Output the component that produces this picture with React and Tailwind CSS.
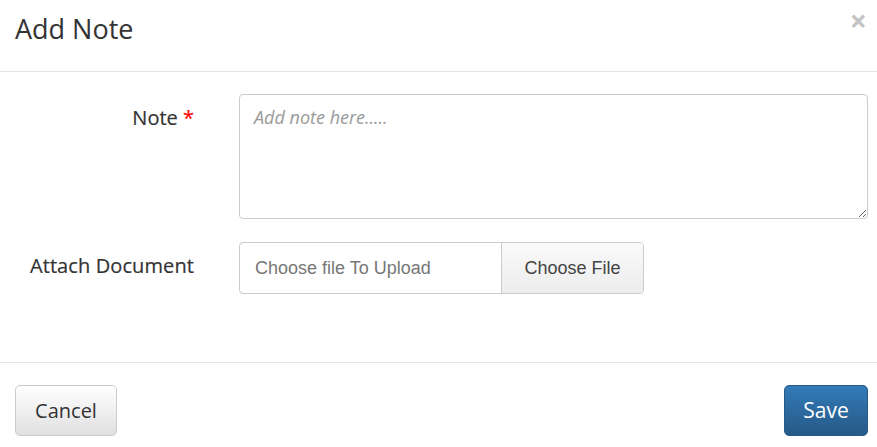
import React from "react";

const App = () => {
  return (
    <div className="w-[877px] h-[447px] bg-white font-['Open_Sans',sans-serif] text-[#333] overflow-hidden">
      {/* Header */}
      <div className="h-[72px] border-b border-[#e5e5e5] flex items-start justify-between pl-[15px] pr-[10px]">
        <h4 className="text-[27px] leading-none mt-[15px] text-[#333]">Add Note</h4>
        <button className="text-[30px] font-bold leading-none mt-[6px] text-[#c4c4c4]">×</button>
      </div>

      {/* Body */}
      <div className="h-[290px] pt-[22px] pr-[9px]">
        <div className="flex">
          <label className="w-[194px] text-right text-[20px] leading-[26px] pt-[11px] text-[#333] [-webkit-text-stroke:0.2px_#333]">
            Note <span className="text-[#ff0000] [-webkit-text-stroke:0.2px_#ff0000]">*</span>
          </label>
          <textarea
            placeholder="Add note here....."
            className="ml-[45px] w-[629px] h-[125px] border border-[#ccc] rounded-[4px] px-[14px] py-[9px] text-[18px] italic placeholder:text-[#999] resize-y outline-none"
          />
        </div>
        <div className="flex mt-[23px]">
          <label className="w-[194px] text-right text-[20px] leading-[26px] pt-[11px] pl-[20px] text-[#333] whitespace-nowrap tracking-[0.1px] [-webkit-text-stroke:0.2px_#333]">
            Attach Document
          </label>
          <div className="ml-[45px] w-[405px] h-[52px] flex border border-[#ccc] rounded-[4px] overflow-hidden font-['Liberation_Sans',Arial,sans-serif]">
            <div className="flex-1 flex items-center pl-[15px] text-[18px] text-[#777]">
              Choose file To Upload
            </div>
            <div className="w-[142px] flex items-center justify-center border-l border-[#ccc] bg-gradient-to-b from-[#fafafa] to-[#ececec] text-[18px] text-[#444]">
              Choose File
            </div>
          </div>
        </div>
      </div>

      {/* Footer */}
      <div className="border-t border-[#e5e5e5] flex justify-between items-start pt-[22px] px-[15px] pr-[9px]">
        <button className="w-[102px] h-[51px] rounded-[5px] border border-[#ccc] bg-gradient-to-b from-white to-[#e0e0e0] text-[20px] text-[#333]">
          Cancel
        </button>
        <button className="w-[84px] h-[51px] rounded-[5px] border border-[#265a88] bg-gradient-to-b from-[#337ab7] to-[#265a88] text-[21px] text-white">
          Save
        </button>
      </div>
    </div>
  );
};

export default App;
